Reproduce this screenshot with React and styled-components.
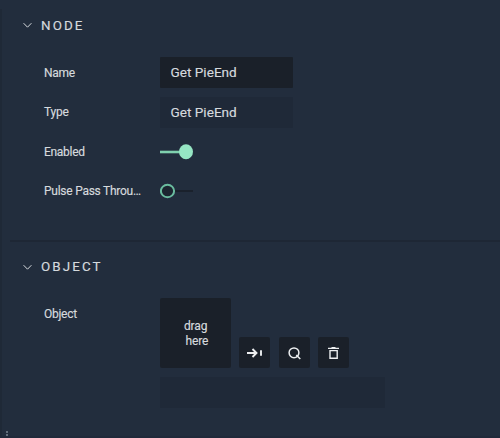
import React from "react";
import styled, { createGlobalStyle } from "styled-components";

const GlobalStyle = createGlobalStyle`
  * { box-sizing: border-box; }
  body { margin: 0; background: #222d3d; overflow: hidden; }
`;

const Panel = styled.main`
  position: relative;
  width: 500px;
  height: 438px;
  overflow: hidden;
  background: #222d3d;
  color: #d6dade;
  font-family: Roboto, sans-serif;
  font-size: 12px;
  -webkit-text-stroke: 0.15px currentColor;
  border-bottom: 2px solid #20293a;
`;

const Edge = styled.div`
  position: absolute;
  left: 0;
  top: 9px;
  bottom: 0;
  width: 2px;
  background: #1f2937;
`;

const Grip = styled.svg`
  position: absolute;
  left: 6px;
  top: 431px;
`;

const Section = styled.section`
  height: ${(p) => p.$height}px;
`;

const Header = styled.header`
  display: flex;
  align-items: center;
  height: ${(p) => p.$height || 51}px;
  padding-left: 23px;
`;

const Title = styled.h2`
  margin: 0 0 0 9px;
  font-size: 13.4px;
  font-weight: 400;
  line-height: 16px;
  letter-spacing: 2.1px;
`;

const Divider = styled.hr`
  height: 2px;
  margin: 0 0 0 10px;
  border: 0;
  background: #1e2735;
`;

const Rows = styled.div`
  display: grid;
  grid-auto-rows: 31px;
  row-gap: 8.5px;
  padding: 6px 0 0 44px;
`;

const Row = styled.div`
  display: grid;
  grid-template-columns: 98px 1fr;
  column-gap: 18px;
  align-items: center;
`;

const Label = styled.span`
  padding-top: 0.8px;
  font-size: 12px;
  letter-spacing: ${(p) => p.$spacing || -0.25}px;
  white-space: nowrap;
  line-height: 16px;
`;

const Field = styled.div`
  display: flex;
  align-items: center;
  width: ${(p) => p.$width || 133}px;
  height: 31px;
  padding: 0 0 1px 10.5px;
  border-radius: 1px;
  background: ${(p) => (p.$readOnly ? "#1f2938" : "#1a2029")};
  font-size: 13.6px;
`;

const Toggle = styled.svg`
  display: block;
`;

const ObjectRow = styled.div`
  display: grid;
  grid-template-columns: 98px 1fr;
  column-gap: 18px;
  padding: 6px 0 0 44px;
`;

const ObjectLabel = styled(Label)`
  padding-top: 8px;
`;

const Tools = styled.div`
  display: flex;
  align-items: flex-end;
  margin-bottom: 9px;
`;

const DropZone = styled.div`
  display: flex;
  flex-direction: column;
  align-items: flex-start;
  justify-content: center;
  width: 71px;
  height: 70px;
  margin-right: 8px;
  padding: 2px 0 0 24px;
  border-radius: 2px;
  background: #1a2029;
  font-size: 12px;
  line-height: 15.5px;
`;

const DropWord = styled.span`
  padding-left: ${(p) => p.$indent || 0}px;
  letter-spacing: -0.15px;
`;

const IconButton = styled.button`
  display: block;
  width: 31px;
  height: 31px;
  margin: 0 ${(p) => p.$gap || 0}px 0 0;
  padding: 0;
  border: 0;
  border-radius: 2px;
  background: #1a2029;
  color: #eceef0;
`;

const Glyph = styled.svg`
  display: block;
  fill: none;
  stroke: currentColor;
`;

function Chevron() {
  return (
    <Glyph width="9" height="7" viewBox="0 0 9 7" strokeWidth="1">
      <path d="M.6 1.2 4.5 5.2 8.4 1.2" />
    </Glyph>
  );
}

function Switch({ on }) {
  return (
    <Toggle width="34" height="16" viewBox="0 0 34 16">
      {on ? (
        <>
          <path d="M0 8H22" stroke="#7fd0ae" strokeWidth="2.6" />
          <ellipse cx="26" cy="7.7" rx="7" ry="7.5" fill="#96e6c4" />
        </>
      ) : (
        <>
          <path d="M15 8H33" stroke="#1a212b" strokeWidth="1.8" />
          <ellipse cx="7.5" cy="8" rx="6.6" ry="6.2" fill="#1c2530" stroke="#6abc9f" strokeWidth="2" />
        </>
      )}
    </Toggle>
  );
}

export default function App() {
  return (
    <>
      <GlobalStyle />
      <Panel>
        <Edge />
        <Section $height={240}>
          <Header>
            <Chevron />
            <Title>NODE</Title>
          </Header>
          <Rows>
            <Row><Label>Name</Label><Field>Get PieEnd</Field></Row>
            <Row><Label>Type</Label><Field $readOnly>Get PieEnd</Field></Row>
            <Row><Label $spacing={-0.3}>Enabled</Label><Switch on /></Row>
            <Row><Label>Pulse Pass Throu…</Label><Switch /></Row>
          </Rows>
        </Section>
        <Divider />
        <Section $height={194}>
          <Header $height={50}>
            <Chevron />
            <Title>OBJECT</Title>
          </Header>
          <ObjectRow>
            <ObjectLabel>Object</ObjectLabel>
            <div>
              <Tools>
                <DropZone>
                  <DropWord>drag</DropWord>
                  <DropWord $indent={1.5}>here</DropWord>
                </DropZone>
                <IconButton $gap={9} aria-label="Assign">
                  <Glyph width="31" height="31" viewBox="0 0 31 31" strokeWidth="1.9">
                    <path d="M8 16H17.5M13.5 12 17.5 16 13.5 20M22 13.2V18.8" />
                  </Glyph>
                </IconButton>
                <IconButton $gap={8} aria-label="Search">
                  <Glyph width="31" height="31" viewBox="0 0 31 31" strokeWidth="1.5">
                    <circle cx="15" cy="15.8" r="4.9" />
                    <path d="M17.3 18 21.3 22" />
                  </Glyph>
                </IconButton>
                <IconButton aria-label="Delete">
                  <Glyph width="31" height="31" viewBox="0 0 31 31" strokeWidth="1.4">
                    <path d="M10 11.4H21M13.5 10.6H17.5M12 13.6H19.2V21.2H12Z" />
                  </Glyph>
                </IconButton>
              </Tools>
              <Field $readOnly $width={225} />
            </div>
          </ObjectRow>
        </Section>
        <Grip width="2" height="7" viewBox="0 0 2 7" fill="#626e7c">
          <path d="M0 0H2V2H0ZM0 3H2V5H0ZM0 6H2V7H0Z" />
        </Grip>
      </Panel>
    </>
  );
}
